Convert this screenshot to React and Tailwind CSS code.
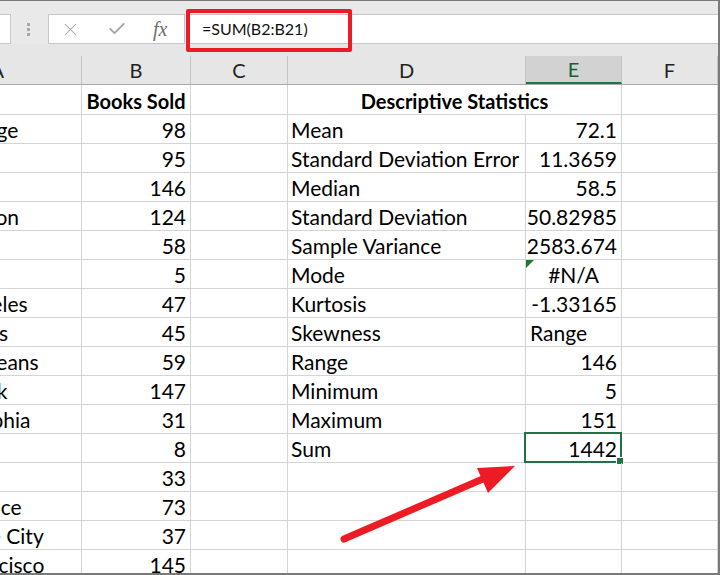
import { X, Check } from "lucide-react";

const rows = [
  { a: "Anchorage", b: "98", d: "Mean", e: "72.1" },
  { a: "Miami", b: "95", d: "Standard Deviation Error", e: "11.3659" },
  { a: "Dallas", b: "146", d: "Median", e: "58.5" },
  { a: "Charleston", b: "124", d: "Standard Deviation", e: "50.82985" },
  { a: "Seattle", b: "58", d: "Sample Variance", e: "2583.674" },
  { a: "Denver", b: "5", d: "Mode", e: "#N/A", center: true, mark: true },
  { a: "Los Angeles", b: "47", d: "Kurtosis", e: "-1.33165" },
  { a: "Las Vegas", b: "45", d: "Skewness", e: "Range", left: true },
  { a: "New Orleans", b: "59", d: "Range", e: "146" },
  { a: "New York", b: "147", d: "Minimum", e: "5" },
  { a: "Philadelphia", b: "31", d: "Maximum", e: "151" },
  { a: "Boston", b: "8", d: "Sum", e: "1442", selected: true },
  { a: "Austin", b: "33" },
  { a: "Providence", b: "73" },
  { a: "Salt Lake City", b: "37" },
  { a: "San Francisco", b: "145" },
];

const cell = "h-full border-r border-[#d4d4d4] flex items-center pt-[2px] overflow-hidden whitespace-nowrap";

function Row({ r }) {
  return (
    <div className="flex h-[29px] border-b border-[#d4d4d4]">
      <div className={`${cell} w-[165px] pl-[2px]`}>{r.a}</div>
      <div className={`${cell} w-[109px] justify-end pr-[4px]`}>{r.b}</div>
      <div className={`${cell} w-[97px]`}></div>
      <div className={`${cell} w-[238px] pl-[3px]`}>{r.d}</div>
      <div
        className={`${cell} w-[96px] relative overflow-visible ${
          r.center ? "justify-center" : r.left ? "justify-start pl-[4px]" : "justify-end pr-[4px]"
        }`}
      >
        {r.mark && (
          <svg className="absolute left-0 top-0" width="8" height="8" viewBox="0 0 8 8">
            <polygon points="0,0 8,0 0,8" fill="#1b7a2c" />
          </svg>
        )}
        {r.e}
        {r.selected && (
          <div className="absolute -left-[2px] -top-[2px] -right-[1px] -bottom-[1px] border-2 border-[#217346]">
            <div className="absolute -right-[4px] -bottom-[4px] w-[6px] h-[6px] bg-[#217346] border border-white box-content" />
          </div>
        )}
      </div>
      <div className={`${cell} w-[96px]`}></div>
    </div>
  );
}

export default function App() {
  return (
    <div className="relative w-[720px] h-[575px] overflow-hidden bg-white border-t border-r-2 border-b-2 border-[#7a7a7a] font-['Lato','Liberation_Sans',sans-serif] text-[21px] text-black">
      <div className="h-[13px] bg-[#e9e9e9]" />

      {/* formula bar */}
      <div className="flex h-[30px] bg-[#e9e9e9]">
        <div className="w-[11px] bg-white border-y border-r border-[#c6c6c6]" />
        <div className="w-[37px] flex flex-col items-center justify-center gap-[2px] pr-[2px]">
          <span className="w-[3px] h-[3px] bg-[#a8a8a8]" />
          <span className="w-[3px] h-[3px] bg-[#a8a8a8]" />
          <span className="w-[3px] h-[3px] bg-[#a8a8a8]" />
        </div>
        <div className="w-[137px] bg-white border border-[#c6c6c6] flex items-center">
          <X size={21} strokeWidth={1.2} className="text-[#a5a5a5] ml-[11px]" />
          <Check size={20} strokeWidth={2.2} className="text-[#a5a5a5] ml-[26px]" />
          <span className="ml-[26px] font-['Liberation_Serif',serif] italic text-[20px] text-[#6e6e6e] leading-none">fx</span>
        </div>
        <div className="w-[2px]" />
        <div className="flex-1 bg-white border-y border-[#c6c6c6] flex items-center pl-[15px] text-[16px] text-[#111]">
          =SUM(B2:B21)
        </div>
      </div>

      <div className="h-[12px] bg-[#e6e6e6]" />

      <div className="-ml-[83px]">
        {/* column headers */}
        <div className="flex h-[29px] bg-[#e6e6e6] border-b border-[#ababab] text-[20px] text-[#222]">
          <div className="w-[165px] h-full border-r border-[#c3c3c3] flex items-center justify-end pr-[77px]">A</div>
          <div className="w-[109px] h-full border-r border-[#c3c3c3] flex items-center justify-center">B</div>
          <div className="w-[97px] h-full border-r border-[#c3c3c3] flex items-center justify-center">C</div>
          <div className="w-[238px] h-full border-r border-[#c3c3c3] flex items-center justify-center">D</div>
          <div className="w-[96px] h-full border-r border-[#c3c3c3] flex items-center justify-center bg-[#d2d2d2] text-[#185c37] border-b-2 border-b-[#217346]">E</div>
          <div className="w-[96px] h-full border-r border-[#c3c3c3] flex items-center justify-center">F</div>
        </div>

        {/* row 1 */}
        <div className="flex h-[30px] border-b border-[#d4d4d4] font-bold text-[20px]">
          <div className={`${cell} w-[165px]`}></div>
          <div className={`${cell} w-[109px] justify-center`}>Books Sold</div>
          <div className={`${cell} w-[97px]`}></div>
          <div className={`${cell} w-[334px] justify-center`}>Descriptive Statistics</div>
          <div className={`${cell} w-[96px]`}></div>
        </div>

        {rows.map((r, i) => (
          <Row key={i} r={r} />
        ))}
      </div>

      {/* annotations */}
      <div className="absolute left-[186px] top-[8px] w-[166px] h-[43px] border-4 border-[#ed1c24] rounded-[2px]" />
      <svg className="absolute left-0 top-0 pointer-events-none" width="720" height="575">
        <line x1="344" y1="538" x2="492" y2="474" stroke="#ed1c24" strokeWidth="7" strokeLinecap="round" />
        <polygon points="515,465 477,467 488,492" fill="#ed1c24" />
      </svg>
    </div>
  );
}
